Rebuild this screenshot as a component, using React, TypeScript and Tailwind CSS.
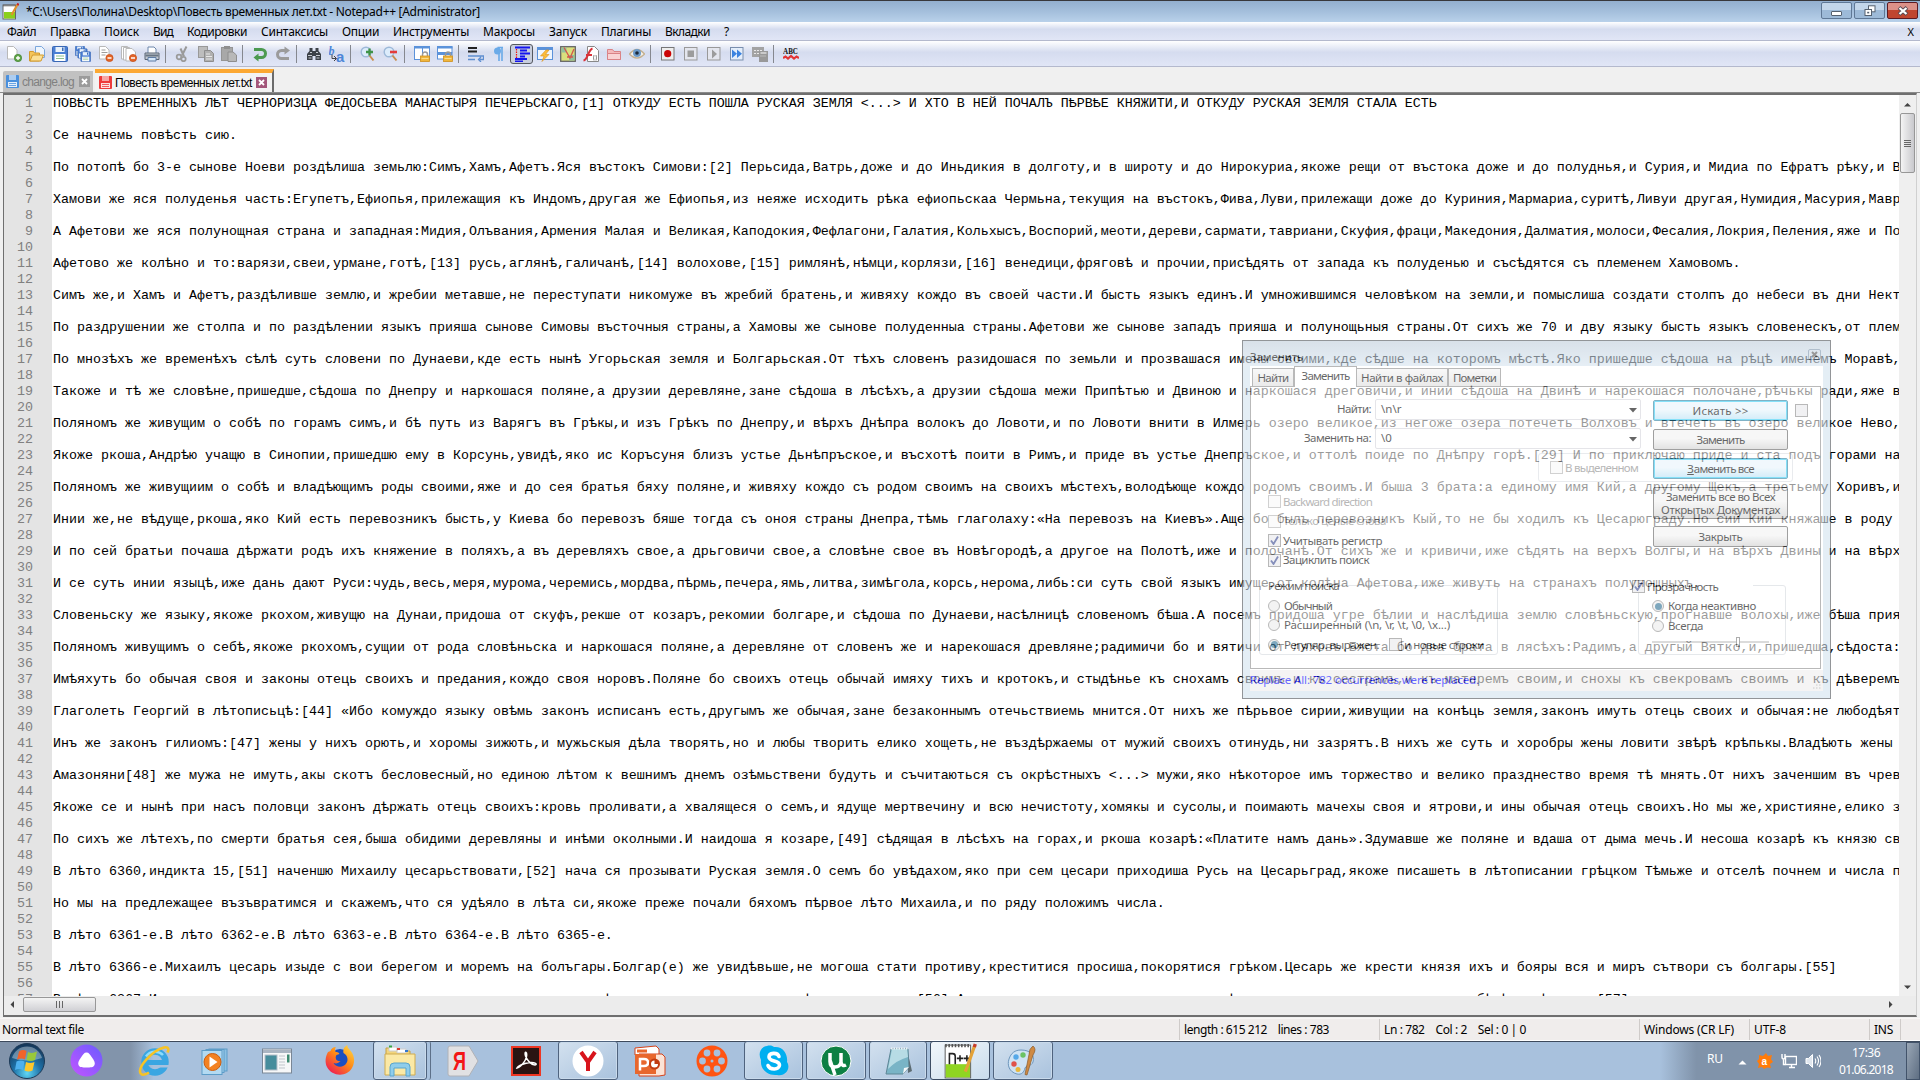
import React, { useLayoutEffect, useRef } from 'react';

const LINES: string[] = [
  'ПОВѢСТЬ ВРЕМЕННЫХЪ ЛѢТ ЧЕРНОРИЗЦА ФЕДОСЬЕВА МАНАСТЫРЯ ПЕЧЕРЬСКАГО,[1] ОТКУДУ ЕСТЬ ПОШЛА РУСКАЯ ЗЕМЛЯ <...> И ХТО В НЕЙ ПОЧАЛЪ ПѢРВѢЕ КНЯЖИТИ,И ОТКУДУ РУСКАЯ ЗЕМЛЯ СТАЛА ЕСТЬ',
  'Се начнемь повѣсть сию.',
  'По потопѣ бо 3-е сынове Ноеви роздѣлиша земьлю:Симъ,Хамъ,Афетъ.Яся въстокъ Симови:[2] Перьсида,Ватрь,доже и до Иньдикия в долготу,и в широту и до Нирокуриа,якоже рещи от въстока доже и до полуднья,и Сурия,и Мидиа по Ефратъ рѣку,и Вавилонъ',
  'Хамови же яся полуденья часть:Егупетъ,Ефиопья,прилежащия къ Индомъ,другая же Ефиопья,из неяже исходить рѣка ефиопьскаа Чермьна,текущия на въстокъ,Фива,Луви,прилежащи доже до Куриния,Мармариа,суритѣ,Ливуи другая,Нумидия,Масурия,Мавритания',
  'А Афетови же яся полунощная страна и западная:Мидия,Олъвания,Армения Малая и Великая,Каподокия,Фефлагони,Галатия,Кольхысъ,Воспорий,меоти,дереви,сармати,тавриани,Скуфия,фраци,Македония,Далматия,молоси,Фесалия,Локрия,Пеления,яже и Полопонисъ',
  'Афетово же колѣно и то:варязи,свеи,урмане,готѣ,[13] русь,аглянѣ,галичанѣ,[14] волохове,[15] римлянѣ,нѣмци,корлязи,[16] венедици,фряговѣ и прочии,присѣдять от запада къ полуденью и съсѣдятся съ племенем Хамовомъ.',
  'Симъ же,и Хамъ и Афетъ,раздѣливше землю,и жребии метавше,не переступати никомуже въ жребий братень,и живяху кождо въ своей части.И бысть языкъ единъ.И умножившимся человѣком на земли,и помыслиша создати столпъ до небеси въ дни Нектана',
  'По раздрушении же столпа и по раздѣлении языкъ прияша сынове Симовы въсточныя страны,а Хамовы же сынове полуденныа страны.Афетови же сынове западъ прияша и полунощьныя страны.От сихъ же 70 и дву языку бысть языкъ словенескъ,от племени',
  'По мнозѣхъ же временѣхъ сѣлѣ суть словени по Дунаеви,кде есть нынѣ Угорьская земля и Болгарьская.От тѣхъ словенъ разидошася по земьли и прозвашася имены своими,кде сѣдше на которомъ мѣстѣ.Яко пришедше сѣдоша на рѣцѣ именемъ Моравѣ,и прозвашася',
  'Такоже и тѣ же словѣне,пришедше,сѣдоша по Днепру и наркошася поляне,а друзии деревляне,зане сѣдоша в лѣсѣхъ,а друзии сѣдоша межи Припѣтью и Двиною и наркошася дреговичи,и инии сѣдоша на Двинѣ и нарекошася полочане,рѣчькы ради,яже втечеть',
  'Поляномъ же живущим о собѣ по горамъ симъ,и бѣ путь из Варягъ въ Грѣкы,и изъ Грѣкъ по Днепру,и вѣрхъ Днѣпра волокъ до Ловоти,и по Ловоти внити в Илмерь озеро великое,из негоже озера потечеть Волховъ и втечеть въ озеро великое Нево,и того',
  'Якоже ркоша,Андрѣю учащю в Синопии,пришедшю ему в Корсунь,увидѣ,яко ис Коръсуня близъ устье Дьнѣпръское,и въсхотѣ поити в Римъ,и приде въ устье Днепръское,и оттолѣ поиде по Днѣпру горѣ.[29] И по приключаю приде и ста подъ горами на березѣ',
  'Поляномъ же живущиим о собѣ и владѣющимъ роды своими,яже и до сея братья бяху поляне,и живяху кождо съ родом своимъ на своихъ мѣстехъ,володѣюще кождо родомъ своимъ.И быша 3 брата:а единому имя Кий,а другому Щекъ,а третьему Хоривъ,и сестра',
  'Инии же,не вѣдуще,ркоша,яко Кий есть перевозникъ бысть,у Киева бо перевозъ бяше тогда съ оноя страны Днепра,тѣмь глаголаху:«На перевозъ на Киевъ».Аще бо былъ перевозникъ Кый,то не бы ходилъ къ Цесарюграду.Но сий Кий княжаше в роду своемь',
  'И по сей братьи почаша дѣржати родъ ихъ княжение в поляхъ,а въ деревляхъ свое,а дрьговичи свое,а словѣне свое въ Новѣгородѣ,а другое на Полотѣ,иже и полочанѣ.От сихъ же и кривичи,иже сѣдять на верхъ Волгы,и на вѣрхъ Двины и на вѣрхъ Днѣпра',
  'И се суть инии языцѣ,иже дань дают Руси:чудь,весь,меря,мурома,черемись,мордва,пѣрмь,печера,ямь,литва,зимѣгола,корсь,нерома,либь:си суть свой языкъ имуще,от колѣна Афетова,иже живуть на странахъ полунощныхъ.',
  'Словеньску же языку,якоже ркохом,живущю на Дунаи,придоша от скуфъ,рекше от козаръ,рекомии болгаре,и сѣдоша по Дунаеви,насѣлницѣ словеномъ бѣша.А посемъ придоша угре бѣлии и наслѣдиша землю словѣньскую,прогнавше волохы,иже бѣша прияли',
  'Поляномъ живущимъ о себѣ,якоже ркохомъ,сущии от рода словѣньска и наркошася поляне,а деревляне от словенъ же и нарекошася древляне;радимичи бо и вятичи от ляховъ.Бяста бо два брата в лясѣхъ:Радимъ,а другый Вятко,и,пришедша,сѣдоста:Радимъ',
  'Имѣяхуть бо обычая своя и законы отець своихъ и предания,кождо своя норовъ.Поляне бо своихъ отець обычай имяху тихъ и кротокъ,и стыдѣнье къ снохамъ своимъ и къ сестрамъ,и къ матеремъ своим,и снохы къ свекровамъ своимъ и къ дѣверемъ велико',
  'Глаголеть Георгий в лѣтописьцѣ:[44] «Ибо комуждо языку овѣмь законъ исписанъ есть,другымъ же обычая,зане безаконнымъ отечьствиемь мнится.От нихъ же пѣрьвое сирии,живущии на конѣць земля,законъ имуть отець своих и обычая:не любодѣяти',
  'Инъ же законъ гилиомъ:[47] жены у нихъ орють,и хоромы зижють,и мужьскыя дѣла творять,но и любы творить елико хощеть,не въздѣржаемы от мужий своихъ отинудь,ни зазрятъ.В нихъ же суть и хоробры жены ловити звѣрѣ крѣпькы.Владѣють жены мужьми',
  'Амазоняни[48] же мужа не имуть,акы скотъ бесловесный,но единою лѣтом к вешнимъ днемъ озѣмьствени будуть и съчитаються съ окрѣстныхъ <...> мужи,яко нѣкоторое имъ торжество и велико празднество время тѣ мнять.От нихъ заченшим въ чревѣ',
  'Якоже се и нынѣ при насъ половци законъ дѣржать отець своихъ:кровь проливати,а хвалящеся о семъ,и ядуще мертвечину и всю нечистоту,хомякы и сусолы,и поимають мачехы своя и ятрови,и ины обычая отець своихъ.Но мы же,християне,елико земль',
  'По сихъ же лѣтехъ,по смерти братья сея,быша обидими деревляны и инѣми околными.И наидоша я козаре,[49] сѣдящая в лѣсѣхъ на горах,и ркоша козарѣ:«Платите намъ дань».Здумавше же поляне и вдаша от дыма мечь.И несоша козарѣ къ князю своему',
  'В лѣто 6360,индикта 15,[51] наченшю Михаилу цесарьствовати,[52] нача ся прозывати Руская земля.О семъ бо увѣдахом,яко при сем цесари приходиша Русь на Цесарьград,якоже писашеть в лѣтописании грѣцком Тѣмьже и отселѣ почнем и числа положим',
  'Но мы на предлежащее възъвратимся и скажемъ,что ся удѣяло в лѣта си,якоже преже почали бяхомъ пѣрвое лѣто Михаила,и по ряду положимъ числа.',
  'В лѣто 6361-е.В лѣто 6362-е.В лѣто 6363-е.В лѣто 6364-е.В лѣто 6365-е.',
  'В лѣто 6366-е.Михаилъ цесарь изыде с вои берегом и моремъ на болъгары.Болгар(е) же увидѣвьше,не могоша стати противу,креститися просиша,покорятися грѣком.Цесарь же крести князя ихъ и бояры вся и миръ сътвори съ болгары.[55]',
  'В лѣто 6367.Имаху дань варязи,приходяще изъ заморья,на чюди,и на словѣнехъ,и на меряхъ и на всѣхъ,кривичахъ.[56] А козаре имахуть на полянех,и на сѣверехъ,и на вятичихъ,имаху по бѣлѣ и вѣверици[57] от дыма.',
];

/** Single-line label whose letter spacing is tuned to occupy `w` pixels. */
function Fit({ w, children, className = '' }: { w: number; children: string; className?: string }) {
  const ref = useRef<HTMLSpanElement>(null);
  useLayoutEffect(() => {
    const el = ref.current;
    if (!el) return;
    el.style.letterSpacing = '0px';
    const natural = el.getBoundingClientRect().width;
    el.style.letterSpacing = `${(w - natural) / children.length}px`;
  }, [w, children]);
  return (
    <span ref={ref} className={`inline-block shrink-0 whitespace-pre ${className}`}>
      {children}
    </span>
  );
}

function Svg({ s = 16, v = 16, children }: { s?: number; v?: number; children: React.ReactNode }) {
  return (
    <svg width={s} height={s} viewBox={`0 0 ${v} ${v}`} fill="none" className="block shrink-0">
      {children}
    </svg>
  );
}

/* ---------- toolbar icons ---------- */

const Minus = ({ x = 11.5, y = 12 }) => (
  <>
    <circle cx={x} cy={y} r="3.6" fill="#e2662b" stroke="#c9480f" strokeWidth=".7" />
    <path d={`M${x - 2} ${y}h4`} stroke="#fff" strokeWidth="1.5" />
  </>
);
const Page = ({ x = 1, y = 1, c = '#b9b9b9' }) => (
  <path d={`M${x} ${y}h6l3.5 3.5v9h-9.500z`} fill="#fff" stroke={c} />
);
const Disk = ({ x = 0, y = 0, s = 1, c = '#4a7fd4' }) => (
  <g transform={`translate(${x} ${y}) scale(${s})`}>
    <rect x=".5" y=".5" width="15" height="15" rx="1" fill={c} stroke="#3a68b5" />
    <rect x="3.500" y="1" width="9" height="5" fill="#e8f1fb" />
    <rect x="10" y="1.500" width="1.500" height="3.500" fill="#3d6cb5" />
    <rect x="2.500" y="8" width="11" height="7" fill="#fff" />
    <path d="M4 10h8M4 12.500h8" stroke="#8dc08d" />
  </g>
);
const Lock = ({ x = 7, y = 6 }) => (
  <g transform={`translate(${x} ${y})`}>
    <path d="M2 5V3a2.500 2.500 0 0 1 5 0v2" stroke="#9a9a9a" strokeWidth="1.500" />
    <rect x="0" y="4.500" width="9" height="5.500" fill="#f0b63c" stroke="#cf8f1d" strokeWidth=".8" />
    <path d="M1 7h7" stroke="#fbdc8a" />
  </g>
);

const icons: (React.ReactNode | 'sep')[] = [
  <Svg><Page x={1.5} y={0.5} /><circle cx="12" cy="12" r="3.700" fill="#5fa348" stroke="#3c7d2a" strokeWidth=".6" /><path d="M12 10v4M10 12h4" stroke="#fff" strokeWidth="1.300" /></Svg>,
  <Svg><path d="M6.500 .5h6l3 3v8h-9z" fill="#eef5fd" stroke="#7ba7dc" /><path d="M.5 5.500h4l1 1.500h5v8H.500z" fill="#f5c55a" stroke="#d29a2f" /><path d="M1 15l2.500-6h11L12 15z" fill="#fbdf94" stroke="#d29a2f" /></Svg>,
  <Svg><Disk /></Svg>,
  <Svg><Disk x={0} y={0} s={0.62} /><Disk x={2.500} y={2.500} s={0.62} /><Disk x={5.500} y={5.500} s={0.65} /></Svg>,
  <Svg><Page x={1.500} y={0.5} /><path d="M3.500 4h4M3.500 6.500h6M3.500 9h4" stroke="#9c9c9c" /><Minus /></Svg>,
  <Svg><Page x={0.5} y={0.5} /><Page x={2.500} y={1.500} /><Page x={5} y={2.500} /><Minus x={12} /></Svg>,
  <Svg><path d="M4 7V1h6l2 2v4" fill="#fff" stroke="#6e88ab" /><path d="M1 7h14v6.500H1z" fill="#c3c9d1" stroke="#5b6674" /><path d="M1.500 9.500h13" stroke="#697684" strokeWidth="2" /><path d="M4 11.500h8V15H4z" fill="#d5e8fb" stroke="#5f7da5" /></Svg>,
  'sep',
  <Svg><path d="M11.500 .5L7 9.500M5.500 2.500l3.500 8" stroke="#9a9a9a" strokeWidth="2" /><circle cx="4" cy="11" r="2.300" stroke="#9a9a9a" strokeWidth="1.800" /><circle cx="8.500" cy="13" r="2.200" stroke="#9a9a9a" strokeWidth="1.800" /></Svg>,
  <Svg><rect x=".5" y=".5" width="9" height="11" fill="#bdbdbd" stroke="#999" /><path d="M6.500 4.500h6l3 3v8h-9z" fill="#b0b0b0" stroke="#8e8e8e" /><path d="M8 8h4M8 10.500h6M8 13h6" stroke="#e8e8e8" /></Svg>,
  <Svg><rect x=".5" y="1.500" width="11" height="13" fill="#a8a8a8" stroke="#959595" /><rect x="3" y="0" width="6" height="3" fill="#8f8f8f" /><path d="M7 6h5l3.500 3v6.500H7z" fill="#b8b8b8" stroke="#8e8e8e" /></Svg>,
  'sep',
  <Svg><path d="M2 3.500h7.500a4 4 0 0 1 0 8H5" stroke="#4c9a50" strokeWidth="3" /><path d="M6.500 7.500v8L1.500 11.500z" fill="#4c9a50" /></Svg>,
  <Svg><path d="M14 12.500H6.500a4 4 0 0 1 0-8H10" stroke="#9b9b9b" strokeWidth="3" /><path d="M9.500 .5v8L15 4.500z" fill="#9b9b9b" /></Svg>,
  'sep',
  <Svg><path d="M3.500 2h3v3h3V2h3v3l2.500 3v6h-5.500V10h-3v4H1V8l2.500-3z" fill="#3c4148" /><path d="M2 9.500h4M10 9.500h4M4 6.500h2M10 6.500h2M2.500 12h3M10.500 12h3" stroke="#c5c9ce" /></Svg>,
  <Svg><text x="-.5" y="8.500" fontSize="12" fontWeight="700" fontStyle="italic" fontFamily="Liberation Serif, serif" fill="#4d86d8">b</text><text x="7" y="15.500" fontSize="15" fontWeight="700" fontFamily="Liberation Sans, sans-serif" fill="#4d86d8">a</text><path d="M3 8.500v4h4M5 10l2.500 2.500L5 15" stroke="#444" /></Svg>,
  'sep',
  <Svg><circle cx="6" cy="6" r="4.800" fill="#dcecfb" stroke="#9db9d8" strokeWidth="1.400" /><path d="M9.500 9.500l4 5" stroke="#c88d4e" strokeWidth="2" /><path d="M9.500 2.500v7M6 6h7" stroke="#3f9348" strokeWidth="2.300" /></Svg>,
  <Svg><circle cx="6" cy="6" r="4.800" fill="#dcecfb" stroke="#9db9d8" strokeWidth="1.400" /><path d="M9.500 9.500l4 5" stroke="#c88d4e" strokeWidth="2" /><path d="M7 6h7" stroke="#e33b3b" strokeWidth="2.600" /></Svg>,
  'sep',
  <Svg><rect x=".5" y=".5" width="8" height="13" fill="#fff" stroke="#5b92da" /><rect x="8.500" y=".5" width="7" height="13" fill="#fff" stroke="#5b92da" /><path d="M0 1.500h16" stroke="#5b92da" strokeWidth="2" /><Lock x={6.500} y={5.500} /></Svg>,
  <Svg><rect x=".5" y=".5" width="14.500" height="6" fill="#fff" stroke="#5b92da" /><rect x=".5" y="7" width="14.500" height="6" fill="#fff" stroke="#5b92da" /><path d="M0 1.500h15.500M0 8h15" stroke="#5b92da" strokeWidth="2" /><Lock x={6.500} y={5.500} /></Svg>,
  'sep',
  <Svg><path d="M0 2h9M0 5.500h9" stroke="#222" strokeWidth="1.800" /><path d="M0 10h15.500v3.500h-4M0 13.500h7M13 11l-2.500 2.500L13 16" stroke="#5e8ed0" strokeWidth="1.300" /></Svg>,
  <Svg><path d="M6.500 1.500H12M8 1v14M11 1v14" stroke="#6aaae8" strokeWidth="1.600" /><circle cx="6.500" cy="5" r="3.500" fill="#6aaae8" /></Svg>,
  <Svg><path d="M1 1.500h15M6 4.500h7M6 7.500h10M6 10.500h5M1 13h12M1 15.500h8" stroke="#1414f0" strokeWidth="1.800" /><path d="M2.500 3v9" stroke="#f01414" strokeDasharray="1.500 1" strokeWidth="1.200" /></Svg>,
  <Svg><rect x=".5" y="1.500" width="15" height="12" fill="#eef5fd" stroke="#5b92da" /><path d="M0 2.500h16" stroke="#5b92da" strokeWidth="3" /><path d="M9 4L3.500 10H7l-2 5.500L12 8.500H8.500L12 4z" fill="#fbbd3a" stroke="#d8901f" strokeWidth=".6" /></Svg>,
  <Svg><rect x=".7" y=".7" width="14.600" height="14.600" fill="#d9df7d" stroke="#666" strokeWidth="1.300" /><path d="M1.500 1.500h5v5h-5zM9 9h5.500v5.500H9z" fill="#8fc0a0" /><path d="M4 1.500L10 12l4-9M7 11h6" stroke="#d3564e" strokeWidth="1.300" /></Svg>,
  <Svg><path d="M4.500 .5h7l4 4v11h-11z" fill="#fff" stroke="#888" /><path d="M.5 14.500C5 14 5 4 9.500 2.500M3 9h6" stroke="#d8323a" strokeWidth="2" /><path d="M11 9q-1 3 0 5.500M13 9q1 3 0 5.500" stroke="#888" /></Svg>,
  <Svg><path d="M1.500 3.500h5l1.500 2h6.500v8h-13z" fill="#f4b9bb" stroke="#d98286" /><path d="M1.500 7.500h13v6h-13z" fill="#f9d3d4" stroke="#d98286" /></Svg>,
  <Svg><path d="M.5 8Q8-1 15.500 8 8 16 .5 8z" fill="#f4f0ea" stroke="#c4b08f" strokeWidth="1.400" /><circle cx="8" cy="7" r="4" fill="#6b9ac9" /><circle cx="8" cy="7" r="1.800" fill="#1c2a3a" /></Svg>,
  'sep',
  <Svg><rect x="1.500" y="1.500" width="12.500" height="12.500" fill="#eee" stroke="#777" /><circle cx="7.700" cy="7.700" r="3.600" fill="#cb0404" /></Svg>,
  <Svg><rect x="1.500" y="1.500" width="12.500" height="12.500" fill="#e4e6ee" stroke="#999" /><rect x="4.500" y="4.500" width="6.500" height="6.500" fill="#9c9c9c" /></Svg>,
  <Svg><rect x="1.500" y="1.500" width="12.500" height="12.500" fill="#e4e6ee" stroke="#999" /><path d="M6 3.500v9l5-4.500z" fill="#9c9c9c" /></Svg>,
  <Svg><rect x="1.500" y="1.500" width="12.500" height="12.500" fill="#e4eefb" stroke="#7a8fae" /><path d="M3 3.500v8.500L8 7.700zM8 3.500v8.500l5-4.300z" fill="#3b83e0" /></Svg>,
  <Svg><path d="M0 1h12v10H0z" fill="#a3a3a3" /><path d="M2 4.500h8M2 7.500h6" stroke="#e8e8e8" strokeDasharray="2 1" /><path d="M7 5h9v11H7z" fill="#999" /><path d="M8.500 7h6" stroke="#ddd" strokeWidth="1.500" /><path d="M8.500 10h6" stroke="#ddd" strokeDasharray="1 1" /></Svg>,
  'sep',
  <Svg><text x="0" y="8" fontSize="9" fontWeight="700" textLength="15" lengthAdjust="spacingAndGlyphs" fontFamily="Liberation Serif, serif" fill="#111">ABC</text><path d="M0 12l2.500-1.500L5 12.500 8 10l3 2.500 2.500-2L16 12" stroke="#e33434" strokeWidth="2.200" /></Svg>,
];

const PRESSED = 26;

/* ---------- main window chrome ---------- */

function TitleBar() {
  return (
    <div className="flex h-[22px] shrink-0 items-center border-t border-[#38383c] bg-linear-to-b from-[#93afcf] via-[#a4bfdc] to-[#b9d1ea] pl-[2px] pr-[2px]">
      <Svg s={17} v={17}>
        <rect x="1" y="2" width="12.500" height="14" fill="#fff" stroke="#666" />
        <path d="M2 9h11v6.500H2z" fill="#8ad01c" />
        <path d="M1.500 2.500h12" stroke="#555" strokeWidth="2" strokeDasharray="1 1" />
        <path d="M15.500 1.500L9.500 12" stroke="#e0912c" strokeWidth="2.200" />
        <path d="M15 .8l2 1" stroke="#c22" strokeWidth="2" />
      </Svg>
      <Fit w={454} className="ml-[7px] text-[12px] leading-[16px] text-black">{'*C:\\Users\\Полина\\Desktop\\Повесть временных лет.txt - Notepad++ [Administrator]'}</Fit>
      <div className="ml-auto flex gap-[2px] self-start pt-px">
        <div className="flex h-[17px] w-[31px] items-center justify-center rounded-[2px] border border-[#5f7896] bg-linear-to-b from-[#c3d6ea] from-50% to-[#9dbad8] to-50%">
          <div className="mt-[5px] h-[5px] w-[11px] rounded-[1px] border border-[#56616f] bg-white" />
        </div>
        <div className="flex h-[17px] w-[31px] items-center justify-center rounded-[2px] border border-[#5f7896] bg-linear-to-b from-[#c3d6ea] from-50% to-[#9dbad8] to-50%">
          <Svg s={12} v={12}><rect x="4.500" y=".8" width="6.500" height="6" fill="#fff" stroke="#56616f" /><rect x="1" y="4.500" width="6.500" height="6" fill="#fff" stroke="#56616f" /><rect x="3.200" y="6.800" width="2" height="1.600" fill="#56616f" /></Svg>
        </div>
        <div className="flex h-[17px] w-[31px] items-center justify-center rounded-[2px] border border-[#5d1a22] bg-linear-to-b from-[#dc9188] from-50% to-[#c0452f] to-50%">
          <Svg s={12} v={12}><path d="M2 2.500l8 7M10 2.500l-8 7" stroke="#5b4a52" strokeWidth="4" /><path d="M2.500 3l7 6M9.500 3l-7 6" stroke="#fff" strokeWidth="2.300" /></Svg>
        </div>
      </div>
    </div>
  );
}

const MENU: [string, number][] = [
  ['Файл', 29], ['Правка', 40], ['Поиск', 35], ['Вид', 20], ['Кодировки', 60], ['Синтаксисы', 67], ['Опции', 37],
  ['Инструменты', 76], ['Макросы', 52], ['Запуск', 38], ['Плагины', 50], ['Вкладки', 45], ['?', 6],
];

function MenuBar() {
  return (
    <div className="flex h-[19px] shrink-0 items-end gap-[14px] border-b border-[#b4b9cd] bg-linear-to-b from-white from-0% via-[#d5dcef] via-40% to-[#e1e6f6] pl-[7px] pr-[6px] text-[12px] leading-[17px] text-black">
      {MENU.map(([t, w]) => <Fit key={t} w={w}>{t}</Fit>)}
      <span className="ml-auto text-[11px]">X</span>
    </div>
  );
}

function Toolbar() {
  return (
    <div className="flex h-[26px] shrink-0 items-center border-b border-[#b4b9cd] bg-linear-to-b from-white from-0% via-[#d5dcef] via-45% to-[#e1e6f6] pl-[2px]">
      {icons.map((ic, i) =>
        ic === 'sep' ? (
          <div key={i} className="flex h-[18px] w-[8px] shrink-0 pl-[2px]"><div className="w-px bg-[#85888f]" /></div>
        ) : (
          <div key={i} className={i === PRESSED ? 'flex h-[20px] w-[23px] shrink-0 items-center justify-center rounded-[3px] border border-[#55585f] bg-[#c8cedd]' : 'flex h-[20px] w-[23px] shrink-0 items-center justify-center'}>{ic}</div>
        ),
      )}
    </div>
  );
}

function TabDisk({ c }: { c: string }) {
  return (
    <Svg s={13} v={13}>
      <rect width="13" height="13" rx="1" fill={c} />
      <rect x="3" y="0" width="7" height="5" fill="#fff" fillOpacity=".55" />
      <rect x="2" y="7" width="9" height="5" fill="#fff" fillOpacity=".85" />
      <path d="M3 8.500h7M3 10.500h7" stroke={c} strokeWidth=".8" />
    </Svg>
  );
}

function CloseX({ c }: { c: string }) {
  return <Svg s={11} v={11}><rect width="11" height="11" fill={c} /><path d="M3 3l5 5M8 3L3 8" stroke="#fff" strokeWidth="1.800" /></Svg>;
}

function Tabs() {
  return (
    <div className="flex h-[25px] shrink-0 items-end gap-[2px] bg-[#f0f0f0] pl-[3px] font-['Liberation_Sans',Arial,sans-serif] text-[12px] leading-[14px]">
      <div className="flex h-[21px] w-[90px] items-center rounded-tl-[2px] bg-[#c1c1c1] pl-[3px]">
        <TabDisk c="#4a90dd" />
        <Fit w={52} className="ml-[3px] text-[#808080]">change.log</Fit>
        <div className="ml-[5px]"><CloseX c="#9b9b9b" /></div>
      </div>
      <div className="flex h-[23px] w-[179px] items-center border-t-4 border-r-2 border-t-[#fca832] border-r-[#6b6b6b] bg-[#f3f3f3] pl-[4px]">
        <TabDisk c="#ee3b3b" />
        <Fit w={137} className="ml-[3px] text-black">Повесть временных лет.txt</Fit>
        <div className="ml-[4px]"><CloseX c="#a3567a" /></div>
      </div>
    </div>
  );
}

function Editor() {
  return (
    <div className="flex h-[925px] shrink-0 flex-col border-t border-[#8a8a8a] bg-[#f0f0f0] pl-[3px] pr-[3px]">
      <div className="flex h-[924px] flex-col border-t-2 border-r border-b-2 border-l border-[#6f6f6f] border-r-[#d0d0d0] bg-[#ececec]">
        <div className="flex h-[901px] shrink-0 overflow-hidden">
          <div className="w-[48px] shrink-0 bg-[#e4e4e4] pt-px pr-[19px] text-right font-['Liberation_Mono','Courier_New',monospace] text-[13.333px] leading-[16px] text-[#808080]">
            {Array.from({ length: 57 }, (_, i) => <div key={i} className="h-[16px]">{i + 1}</div>)}
          </div>
          <div className="w-[1847px] shrink-0 overflow-hidden bg-white pt-px pl-px font-['Liberation_Mono','Courier_New',monospace] text-[13.333px] leading-[16px] text-black">
            {LINES.map((l, i) => <div key={i} className="h-[32px] whitespace-pre">{l}</div>)}
          </div>
          <div className="flex w-[17px] shrink-0 flex-col items-center bg-[#efefef]">
            <div className="flex h-[18px] items-center"><Svg s={7} v={7}><path d="M0 5.500L3.500 2 7 5.500z" fill="#444" /></Svg></div>
            <div className="flex h-[60px] w-[15px] flex-col items-center justify-center gap-px rounded-[2px] border border-[#979797] bg-linear-to-r from-[#f4f4f4] to-[#c9c9cd]">
              {[0, 1, 2, 3].map((k) => <div key={k} className="h-px w-[7px] bg-[#666]" />)}
            </div>
            <div className="mt-auto flex h-[17px] items-center"><Svg s={7} v={7}><path d="M0 1.500L3.500 5 7 1.500z" fill="#444" /></Svg></div>
          </div>
        </div>
        <div className="flex h-[17px] shrink-0 items-center bg-[#ececec] pr-[22px]">
          <div className="flex w-[19px] justify-center pr-[2px]"><Svg s={7} v={7}><path d="M5 0L1.500 3.500 5 7z" fill="#444" /></Svg></div>
          <div className="flex h-[15px] w-[73px] items-center justify-center gap-[2px] rounded-[2px] border border-[#979797] bg-linear-to-b from-[#f4f4f4] to-[#d0d0d4]">
            {[0, 1, 2].map((k) => <div key={k} className="h-[7px] w-px bg-[#666]" />)}
          </div>
          <div className="ml-auto"><Svg s={7} v={7}><path d="M2 0l3.500 3.500L2 7z" fill="#444" /></Svg></div>
        </div>
      </div>
    </div>
  );
}

function StatusBar() {
  const cell = 'flex h-full shrink-0 items-center border-l border-[#cfcbc9] pl-[4px]';
  return (
    <div className="flex h-[23px] shrink-0 items-center border-t border-b border-t-[#f8f6f5] border-b-white bg-[#f0edec] text-[12px] leading-[17px] text-black">
      <div className="flex w-[1179px] shrink-0 pl-[2px]"><Fit w={82}>Normal text file</Fit></div>
      <div className={`${cell} w-[200px]`}><Fit w={145}>{'length : 615 212    lines : 783'}</Fit></div>
      <div className={`${cell} w-[260px]`}><Fit w={142}>{'Ln : 782    Col : 2    Sel : 0 | 0'}</Fit></div>
      <div className={`${cell} w-[110px]`}><Fit w={90}>Windows (CR LF)</Fit></div>
      <div className={`${cell} w-[120px]`}><Fit w={32}>UTF-8</Fit></div>
      <div className={`${cell} w-[31px]`}><Fit w={19}>INS</Fit></div>
      <div className={cell} />
    </div>
  );
}

/* ---------- replace dialog ---------- */

function Check({ on = false, dim = false }: { on?: boolean; dim?: boolean }) {
  return (
    <div className={dim ? 'flex size-[13px] shrink-0 items-center justify-center border border-[#b4b4b4] bg-[#fafafa]' : 'flex size-[13px] shrink-0 items-center justify-center border border-[#8a8a8a] bg-[#e9e9ec]'}>
      {on && <Svg s={9} v={9}><path d="M1 4.500L3.500 8 8 .5" stroke="#35458f" strokeWidth="1.800" /></Svg>}
    </div>
  );
}

function Radio({ on = false }: { on?: boolean }) {
  return (
    <div className="flex size-[12px] shrink-0 items-center justify-center rounded-full border border-[#8a8a8a] bg-[#ececec]">
      {on && <div className="size-[7px] rounded-full bg-[#2a6d92]" />}
    </div>
  );
}

function Combo({ label, w, value }: { label: string; w: number; value: string }) {
  return (
    <div className="flex h-[21px] items-center">
      <div className="-mt-[2px] flex w-[120px] justify-end"><Fit w={w}>{label}</Fit></div>
      <div className="ml-[4px] flex h-[21px] w-[266px] items-center rounded-[2px] border border-[#d5d5dc] bg-white pl-[5px] pr-[3px]">
        <span className="-mt-px">{value}</span>
        <div className="ml-auto"><Svg s={8} v={8}><path d="M0 2h8L4 6.500z" fill="#000" /></Svg></div>
      </div>
    </div>
  );
}

const btn = 'relative flex h-[21px] w-[135px] items-center justify-center rounded-[2px] border border-[#606060] bg-linear-to-b from-[#f2f2f2] from-45% to-[#d0d0d0]';
const btnHot = 'relative flex h-[21px] w-[135px] items-center justify-center rounded-[2px] border border-[#2c7f9f] bg-linear-to-b from-[#e8f5fc] from-45% to-[#b5e0f5] shadow-[inset_0_0_0_1px_#35cdf5]';

function ReplaceDialog() {
  return (
    <div className="absolute top-[340px] left-[1242px] h-[359px] w-[589px] border border-[#4a4f55] bg-[#d3e3f0] text-[11.500px] leading-[12px] text-black opacity-60">
      <div className="flex h-[25px] items-center justify-between bg-linear-to-b from-[#c0cedb] to-[#d6e4f0] pt-[6px] pr-[9px] pl-[7px]">
        <Fit w={53}>Заменить</Fit>
        <div className="-mt-[4px] flex h-[11px] w-[13px] items-center justify-center rounded-[2px] border border-[#7d93ab]"><Svg s={7} v={7}><path d="M1 1l5 5M6 1L1 6" stroke="#555" strokeWidth="2" /></Svg></div>
      </div>
      <div className="mx-[7px] h-[325px] bg-white">
        <div className="relative z-10 flex h-[21px] items-end pl-[2px]">
          <div className="flex h-[19px] w-[42px] items-center justify-center border border-[#8c8c8c] bg-linear-to-b from-[#f4f4f4] to-[#dedede]"><Fit w={31}>Найти</Fit></div>
          <div className="flex h-[21px] w-[63px] items-center justify-center border border-b-0 border-[#8c8c8c] bg-white pb-[2px]"><Fit w={48}>Заменить</Fit></div>
          <div className="flex h-[19px] w-[91px] items-center justify-center border border-l-0 border-[#8c8c8c] bg-linear-to-b from-[#f4f4f4] to-[#dedede]"><Fit w={82}>Найти в файлах</Fit></div>
          <div className="flex h-[19px] w-[53px] items-center justify-center border border-[#8c8c8c] bg-linear-to-b from-[#f4f4f4] to-[#dedede]"><Fit w={43}>Пометки</Fit></div>
        </div>
        <div className="-mt-px h-[283px] w-[571px] border border-[#8c8c8c]">
          <div className="flex h-[184px]">
            <div className="w-[402px] shrink-0">
              <div className="mt-[12px]"><Combo label="Найти:" w={34} value={'\\n\\r'} /></div>
              <div className="mt-[8px]"><Combo label="Заменить на:" w={67} value={'\\0'} /></div>
              <div className="mt-[4px] ml-[287px] flex h-[29px] w-[255px] items-center rounded-[3px] border border-[#dcdfe4] pl-[11px] text-[#888]">
                <Check dim /><Fit w={73} className="ml-[2px]">В выделенном</Fit>
              </div>
              <div className="mt-[10px] ml-[17px] flex flex-col">
                <div className="flex h-[19.500px] items-center gap-[2px] text-[#888]"><Check dim /><Fit w={89}>Backward direction</Fit></div>
                <div className="flex h-[19.500px] items-center gap-[2px] text-[#888]"><Check dim /><Fit w={103}>Только целые слова</Fit></div>
                <div className="flex h-[19.500px] items-center gap-[2px]"><Check on /><Fit w={99}>Учитывать регистр</Fit></div>
                <div className="flex h-[19.500px] items-center gap-[2px]"><Check on /><Fit w={86}>Зациклить поиск</Fit></div>
              </div>
            </div>
            <div className="flex flex-col pt-[13px]">
              <div className={btnHot}><Fit w={56}>{'Искать >>'}</Fit></div>
              <div className={`${btn} mt-[8px]`}><Fit w={48}>Заменить</Fit></div>
              <div className={`${btnHot} mt-[8px]`}><span className="underline">З</span><Fit w={60}>аменить все</Fit></div>
              <div className="relative mt-[8px] flex h-[32px] w-[135px] flex-col items-center justify-center gap-px rounded-[2px] border border-[#606060] bg-linear-to-b from-[#f2f2f2] from-45% to-[#d0d0d0]">
                <Fit w={109}>Заменить все во Всех</Fit><Fit w={119}>Открытых Документах</Fit>
              </div>
              <div className={`${btn} mt-[7px]`}><Fit w={44}>Закрыть</Fit></div>
            </div>
            <div className="mt-[17px] ml-[7px]"><Check /></div>
          </div>
          <div className="mt-[14px] ml-[8px] flex">
            <div className="flex h-[70px] w-[239px] flex-col rounded-[3px] border border-[#d5d9de] pl-[8px]">
              <Fit w={71} className="-mt-[6px] self-start bg-white">Режим поиска</Fit>
              <div className="mt-[4px] flex h-[20px] items-center gap-[4px]"><Radio /><Fit w={48}>Обычный</Fit></div>
              <div className="flex h-[20px] items-center gap-[4px]"><Radio /><Fit w={166}>{'Расширенный (\\n, \\r, \\t, \\0, \\x...)'}</Fit></div>
              <div className="flex h-[19px] items-center gap-[4px]"><Radio on /><Fit w={95}>Регуляр. выражен.</Fit><div className="ml-[6px] flex items-center gap-[2px]"><Check /><Fit w={80}>и новые строки</Fit></div></div>
            </div>
            <div className="ml-[140px] flex h-[70px] w-[148px] flex-col rounded-[3px] border border-[#d5d9de] pl-[13px]">
              <div className="-mt-[6px] -ml-[20px] flex w-[121px] items-center gap-[2px] bg-white"><Check on /><Fit w={71}>Прозрачность</Fit></div>
              <div className="mt-[3px] flex h-[20px] items-center gap-[4px]"><Radio on /><Fit w={88}>Когда неактивно</Fit></div>
              <div className="flex h-[20px] items-center gap-[4px]"><Radio /><Fit w={35}>Всегда</Fit></div>
              <div className="mt-[1px] flex h-[10px] w-[117px] items-center"><div className="h-[2px] w-[84px] bg-[#c4c4c4]" /><div className="h-[10px] w-[4px] border border-[#777] bg-white" /><div className="h-[2px] flex-1 bg-[#c4c4c4]" /></div>
            </div>
          </div>
        </div>
        <div className="mt-[1px] flex h-[21px] items-center justify-between bg-[#efeeed]">
          <Fit w={229} className="-mt-[2px] text-[#0000ff]">Replace All: 782 occurrences were replaced.</Fit>
          <div className="self-end p-[2px]"><Svg s={8} v={8}><path d="M6 1h2M3 4h5M0 7h8" stroke="#aaa" strokeDasharray="1.500 1.500" /></Svg></div>
        </div>
      </div>
    </div>
  );
}

/* ---------- taskbar ---------- */

function Slot({ w, open = false, active = false, children }: { w: number; open?: boolean; active?: boolean; children: React.ReactNode }) {
  const base = 'flex h-[39px] shrink-0 items-center justify-center';
  const look = active
    ? 'rounded-[3px] border border-[#3c4d64] bg-linear-to-br from-[#f2f7fb] to-[#c9dcec]'
    : open
      ? 'rounded-[3px] border border-[#4f637e] bg-linear-to-br from-[#d3e1ef] to-[#a9c2dd] shadow-[inset_0_0_0_1px_#c9daeb]'
      : '';
  return <div className={`${base} ${look}`} style={{ width: w }}>{children}</div>;
}

function Taskbar() {
  return (
    <div className="flex h-[39px] shrink-0 items-end border-t border-[#3d4a5c] bg-linear-to-r from-[#8294ab] from-[6.800%] via-[#a8c1dd] via-[8%] to-[#a8c1dd]">
      <Slot w={54}>
        <Svg s={38} v={38}>
          <defs><radialGradient id="orb" cx=".5" cy=".85" r=".8"><stop offset="0" stopColor="#5fd6f5" /><stop offset=".5" stopColor="#1d6fa5" /><stop offset="1" stopColor="#16395c" /></radialGradient></defs>
          <circle cx="19" cy="19" r="17.500" fill="url(#orb)" stroke="#1d3a57" />
          <path d="M4 16A15.500 15.500 0 0 1 34 16Q19 21 4 16z" fill="#fff" opacity=".35" />
          <path d="M11 9.500q4-2.500 7.500-.5l-1.500 8.500q-4-2-8 .3z" fill="#f0632a" />
          <path d="M20 10q4 2 9-.5L27 18q-4 2-8.500 0z" fill="#98c83a" />
          <path d="M8.500 19.500q4-2 8 0L15 28q-4-2-8 0z" fill="#4db0ee" />
          <path d="M18 20q4 2 8.500 0l-2 8.500q-4 2-8 0z" fill="#fcc72b" />
        </Svg>
      </Slot>
      <Slot w={64}>
        <Svg s={33} v={33}>
          <defs><linearGradient id="alice" x1="1" y1="0" x2="0" y2="1"><stop offset="0" stopColor="#6a5cff" /><stop offset="1" stopColor="#c255ff" /></linearGradient></defs>
          <circle cx="16.500" cy="16.500" r="16" fill="url(#alice)" />
          <path d="M16.500 8.500c2.500 0 3.500 2 5.500 5s3.500 5 2.500 7.500-4 2.500-8 2.500-7 0-8-2.500 .5-4.500 2.500-7.500 3-5 5.500-5z" fill="#fff" />
        </Svg>
      </Slot>
      <Slot w={72}>
        <Svg s={34} v={34}>
          <circle cx="18" cy="18" r="10.500" stroke="#3aa6e2" strokeWidth="6.500" />
          <path d="M9 18.500h18" stroke="#3aa6e2" strokeWidth="5" />
          <path d="M21 23.500h12v-2.500h-12z" fill="#a8c1dd" />
          <path d="M9 12.500A11 11 0 0 1 26 11" stroke="#8edcfa" strokeWidth="2.500" />
          <path d="M4 30C-1 24 16 6 27 3.500c5-1 5 2 3.500 5M4 30c2 1.500 5 .5 8-1.500" stroke="#f7c325" strokeWidth="2.600" />
        </Svg>
      </Slot>
      <Slot w={51}>
        <Svg s={30} v={30}>
          <rect x="8" y="3" width="18" height="22" fill="#8dc1e3" stroke="#5c9cc8" />
          <rect x="5" y="3.500" width="18" height="23" fill="#a5d2ee" stroke="#5c9cc8" />
          <rect x="1" y="4.500" width="20" height="24" fill="#b3daf2" stroke="#5c9cc8" />
          <circle cx="11.500" cy="16" r="8.500" fill="#f38222" stroke="#cc5e10" />
          <path d="M8.500 10.500v11l8-5.500z" fill="#fff" />
        </Svg>
      </Slot>
      <Slot w={72}>
        <Svg s={30} v={30}>
          <rect x=".5" y="3" width="29" height="24" fill="#f6f7f8" stroke="#7a8796" />
          <path d="M1 5.500h28" stroke="#aab5c2" strokeWidth="3" />
          <rect x="3" y="9" width="12" height="15" fill="#468d9c" stroke="#b6bfc9" />
          <path d="M17 10h6M17 13h6M17 16h6M17 19h6M17 22h6" stroke="#c0c5cb" />
          <path d="M25 8.500h2.500v8H25z" fill="#3e8a72" />
        </Svg>
      </Slot>
      <Slot w={54}>
        <Svg s={32} v={32}>
          <defs><linearGradient id="fox" x1="1" y1="0" x2=".2" y2="1"><stop offset="0" stopColor="#ffe14a" /><stop offset=".5" stopColor="#ff8a16" /><stop offset="1" stopColor="#ee1a55" /></linearGradient></defs>
          <circle cx="16" cy="14" r="10" fill="#1b4fc0" />
          <path d="M4 7C1 12 1 18 3 22c5 10 20 10 25 1 4-7 2-14-3-19-1-1-2-3-1.500-4-4 2-4.500 5-4 8 4 2 5 7 3 10-3 5-10 5-13 0 3 1 5 0 7-2-4 1-6-3-4-6l3-1c-1-2-3-2-4-2C11 4 11 3 12 2 9 2 7 4 6.500 6z" fill="url(#fox)" />
        </Svg>
      </Slot>
      <div className="ml-[6px] flex rounded-[3px] border-r border-[#5d7089]">
        <Slot w={54} open>
          <Svg s={34} v={34}>
            <path d="M3 4h9l2 3h13v4h3v19H3z" fill="#f2d57d" stroke="#c6a044" />
            <path d="M6 3h8v4H6zM14 5h9v4h-9z" fill="#fff" stroke="#ccc" /><path d="M6 2.500h3" stroke="#38a845" strokeWidth="2" /><path d="M14 5h3" stroke="#db3b2f" strokeWidth="2" /><path d="M22 7h3" stroke="#3478cf" strokeWidth="2" />
            <path d="M2 10h30v21H2z" fill="#fbe9a6" stroke="#d0ac50" />
            <path d="M7 32V23q0-4 4-4h12q4 0 4 4v9h-4v-8H11v8z" fill="#8fcdec" stroke="#5aa5cd" />
          </Svg>
        </Slot>
        <div className="w-[3px]" />
      </div>
      <div className="ml-[4px]"><Slot w={56}>
        <Svg s={32} v={32}>
          <path d="M3 1h19l9 15-9 15H3q-2 0-2-2V3q0-2 2-2z" fill="#e1e1e3" stroke="#b0b2b7" />
          <text x="6" y="25" fontSize="25" fontWeight="700" fontFamily="Liberation Sans, sans-serif" fill="#f31616" textLength="13" lengthAdjust="spacingAndGlyphs">Я</text>
        </Svg>
      </Slot></div>
      <div className="ml-[6px]"><Slot w={58}>
        <Svg s={30} v={30}>
          <rect x="1" y="1" width="28" height="28" fill="#2a1412" stroke="#ee3623" strokeWidth="2" />
          <path d="M6 22c4-1 11-9 9.500-15-1-2-2 0-1 3 2 5 6 9 9.500 9 3-.5 0-3-5-2.500-5 .5-12 3-13 5.500z" stroke="#fff" strokeWidth="1.500" />
        </Svg>
      </Slot></div>
      <div className="ml-[3px]"><Slot w={60} open>
        <Svg s={32} v={32}><circle cx="16" cy="16" r="15.500" fill="#fff" /><path d="M9 7l7 10 7-10M16 16v10" stroke="#d8141c" strokeWidth="4" /></Svg>
      </Slot></div>
      <Slot w={64}>
        <Svg s={32} v={32}>
          <path d="M1 3l21-2 3 3v6H1z" fill="#fff" stroke="#d5431b" /><path d="M3 6h10" stroke="#e8672d" strokeWidth="3" />
          <path d="M5 9h23l3 3v18l-6 1H5z" fill="#fbe3d6" stroke="#d5431b" />
          <rect x="1" y="9" width="21" height="20" fill="#e8672d" />
          <path d="M6 25.500V14h4q4 0 4 3.500T10 21H7" stroke="#fff" strokeWidth="2.500" />
          <circle cx="20.500" cy="19" r="4.500" fill="#fff" stroke="#c23b12" strokeWidth="2" /><path d="M20.500 19v-4.500a4.500 4.500 0 0 1 4.500 4.500z" fill="#c23b12" />
        </Svg>
      </Slot>
      <Slot w={60}>
        <Svg s={32} v={32}><circle cx="16" cy="16" r="15.500" fill="#ff5412" />{[[11, 8], [21, 8], [6.5, 16], [25.5, 16], [11, 24], [21, 24]].map(([x, y]) => <circle key={`${x}-${y}`} cx={x} cy={y} r="3.400" fill="#a8c1dd" />)}<circle cx="16" cy="16" r="1.500" fill="#a8c1dd" /></Svg>
      </Slot>
      <div className="ml-[2px] flex gap-[3px]">
        <Slot w={59} open>
          <Svg s={32} v={32}><path d="M9 1c3-1 6 0 7 1 9-1 14 7 13 15 4 6-1 15-10 13C9 31 2 24 3 15 0 9 2 2 9 1z" fill="#00aff0" /><path d="M21 11.500C19.500 7 11 7.500 11 12c0 5 10.500 3 10.500 8 0 5-9.500 5.500-11.500 .5" stroke="#fff" strokeWidth="3.600" strokeLinecap="round" /></Svg>
        </Slot>
        <Slot w={60} open>
          <Svg s={32} v={32}><circle cx="16" cy="16" r="15" fill="#0d8043" stroke="#fff" /><path d="M10 8v8.500q0 5.500 5 5.500t6-5V8M10 15l5 15M21 17q1 5 5 3" stroke="#fff" strokeWidth="3.500" /></Svg>
        </Slot>
        <Slot w={58} open>
          <Svg s={32} v={32}><path d="M25 5l5 21-4 2z" fill="#5c6b72" /><path d="M9 4h17l1 18-6 7H4z" fill="#79b4c6" stroke="#5f8796" /><path d="M10 4h15l1 8Q15 15 6 24z" fill="#b7dce5" /><path d="M21 29l1-6 5-1z" fill="#f4f8fa" /><path d="M9 3.500h17" stroke="#eef3f5" strokeWidth="2" strokeDasharray="1.500 1" /></Svg>
        </Slot>
        <Slot w={60} active>
          <Svg s={36} v={34}><rect x="3" y="2" width="24" height="31" fill="#fff" stroke="#666" /><path d="M3.500 20h23v12.500h-23z" fill="#8fd522" /><path d="M3 2.500h24" stroke="#555" strokeWidth="3" strokeDasharray="1.500 1.500" /><path d="M7 20V10h3q2.500 0 2.500 2.500V20M14 14.500h6M17 11.500v6M20.500 14.500h6M23.500 11.500v6" stroke="#222" strokeWidth="1.500" /><path d="M31 2L24 22l-2 5" stroke="#e3a238" strokeWidth="3" /><path d="M29.500 2l3 .9" stroke="#c53d2c" strokeWidth="3" /></Svg>
        </Slot>
        <Slot w={60} open>
          <Svg s={34} v={34}><path d="M15 6c9 0 14 5 12 12-2 5-6 2-8 6-1 4-3 7-8 6C3 28 1 21 3 15 5 9 9 6 15 6z" fill="#cfe3f4" stroke="#6d96bc" /><circle cx="10" cy="13" r="2.700" fill="#55a8e8" /><circle cx="17" cy="11" r="2.700" fill="#6bc265" /><circle cx="8" cy="20" r="2.700" fill="#e0524a" /><circle cx="12" cy="25.500" r="2.500" fill="#e8b83c" /><path d="M27 2Q31 5 27 11l-6 20-2-.5 4-20q0-6 4-8.500z" fill="#cf8a43" stroke="#8a5c2d" strokeWidth=".7" /></Svg>
        </Slot>
      </div>
      <div className="ml-auto flex h-[38px] w-[260px] shrink-0 items-center bg-linear-to-r from-[#a8c1dd] to-[#8093aa] to-[14%] pl-[47px] text-[12px] leading-[13px] text-white">
        <Fit w={16} className="-mt-[6px]">RU</Fit>
        <div className="mt-[2px] ml-[15px]"><Svg s={9} v={9}><path d="M.5 6.500L4.500 2.500l4 4z" fill="#fff" /></Svg></div>
        <div className="ml-[10px]">
          <Svg><path d="M2 2l4 1 3-3 2 3 4-1-1 4 2 3-3 2 1 4-4-.5L7 16l-2-2-4 1 1-4-2-3 2-2z" fill="#ff7b0a" /><text x="4.500" y="11.500" fontSize="10" fontWeight="700" fontFamily="Liberation Sans, sans-serif" fill="#fff">a</text></Svg>
        </div>
        <div className="ml-[8px]"><Svg><rect x="4.500" y="3.500" width="11" height="8" stroke="#fff" strokeWidth="1.400" /><path d="M8 14.500h6M10.500 12v2M2.500 6v5.500h2M1 1v3q0 2 1.500 2T4 4V1" stroke="#fff" strokeWidth="1.400" /></Svg></div>
        <div className="ml-[8px]"><Svg><path d="M1 5.500h2.500L7.500 1.500v13L3.500 10.500H1z" fill="#dfe6ee" stroke="#fff" /><path d="M10 5.500q1.500 2.500 0 5M12 3.500q3 4.500 0 9M14 2q4 6 0 12" stroke="#fff" strokeWidth="1.100" /></Svg></div>
        <div className="ml-[14px] flex w-[62px] flex-col items-center gap-[4px]">
          <Fit w={28}>17:36</Fit><Fit w={54}>01.06.2018</Fit>
        </div>
        <div className="ml-auto h-[38px] w-[14px] border border-[#42536a] bg-linear-to-br from-[#9aa7b6] to-[#5f6f83]" />
      </div>
    </div>
  );
}

export default function App() {
  return (
    <div className="relative flex h-[1080px] w-[1920px] flex-col overflow-hidden bg-[#f0f0f0] font-['Noto_Sans','Open_Sans',sans-serif]">
      <TitleBar />
      <MenuBar />
      <Toolbar />
      <Tabs />
      <Editor />
      <div className="h-px shrink-0 bg-[#f0f0f0]" />
      <StatusBar />
      <Taskbar />
      <ReplaceDialog />
    </div>
  );
}
